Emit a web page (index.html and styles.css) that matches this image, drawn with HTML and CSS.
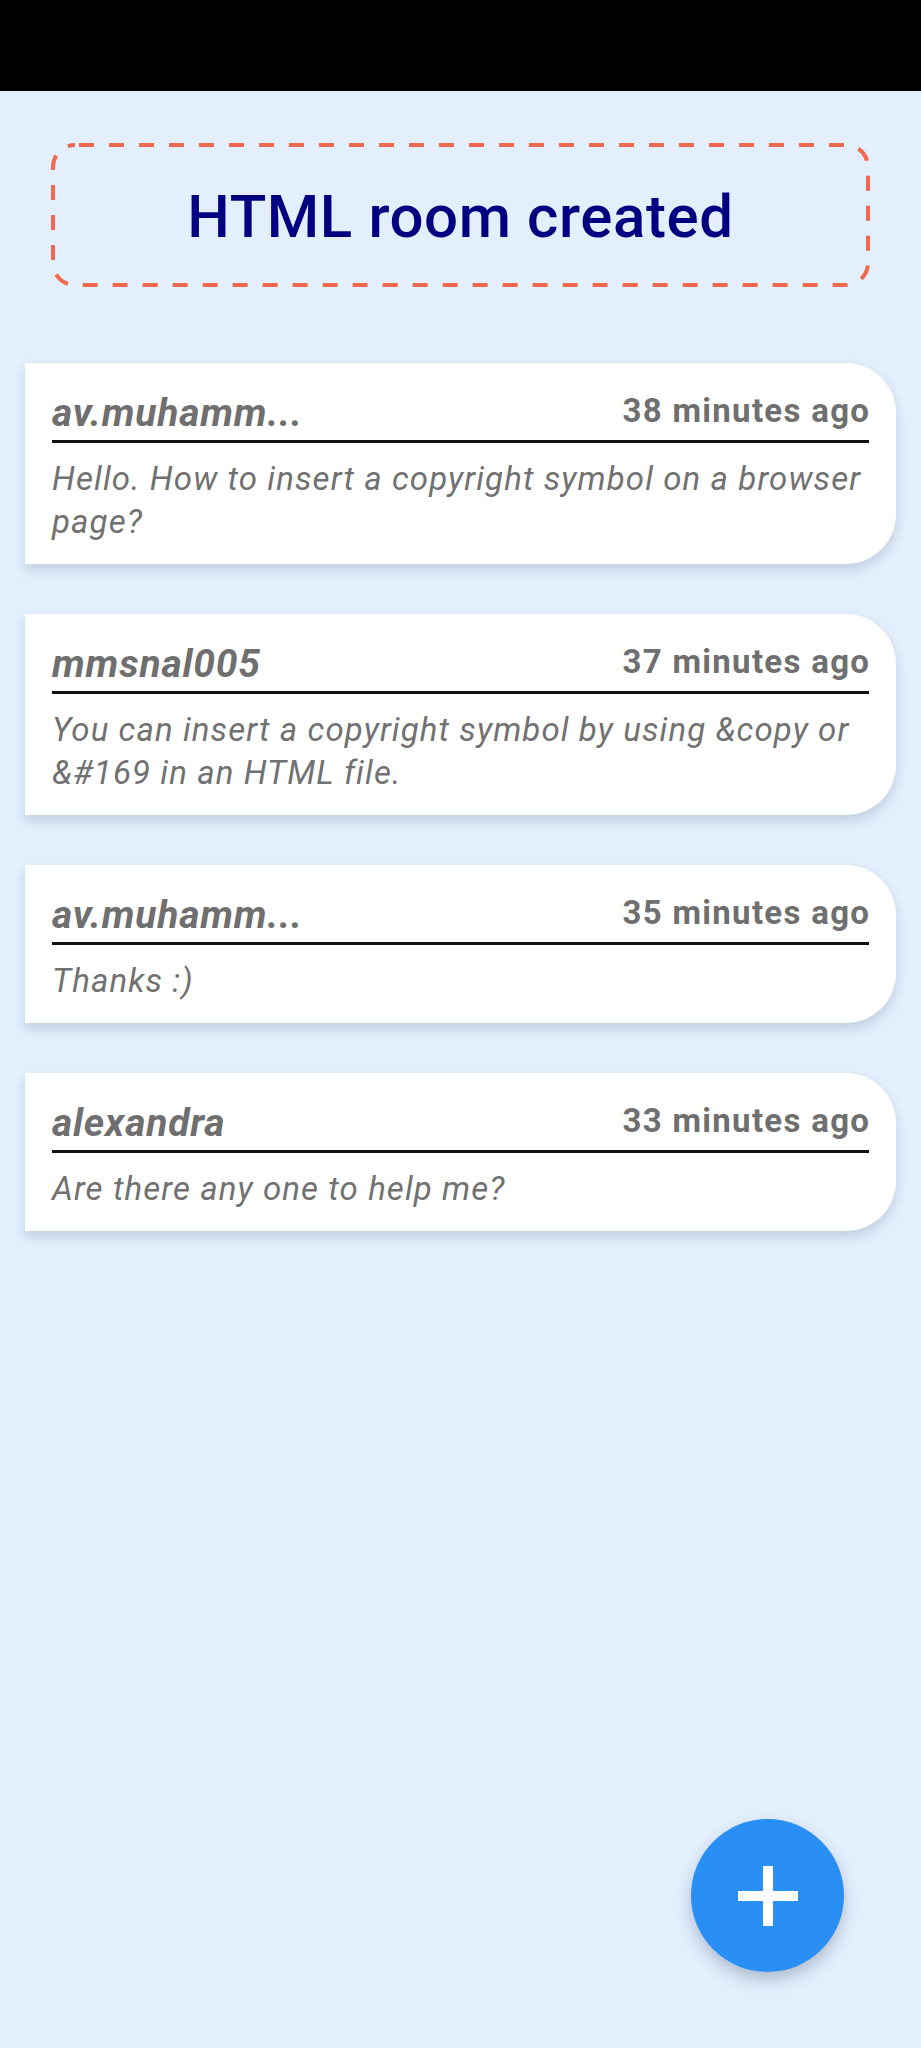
FILE: index.html
```html
<!DOCTYPE html>
<html lang="en">
<head>
<meta charset="utf-8">
<title>HTML room</title>
<link rel="stylesheet" href="styles.css">
</head>
<body>
<div class="statusbar"></div>
<main class="page">
  <div class="room-banner">
    <svg class="banner-frame" width="819" height="144" viewBox="0 0 819 144" aria-hidden="true">
      <rect x="2" y="2" width="815" height="140" rx="22" ry="22" fill="none" stroke="#f0694e" stroke-width="4" stroke-dasharray="15 15" stroke-dashoffset="-4"/>
    </svg>
    <h1 class="room-title">HTML room created</h1>
  </div>
  <ul class="messages">
    <li class="msg">
      <div class="msg-head"><span class="author">av.muhamm...</span><span class="time">38 minutes ago</span></div>
      <p class="msg-text">Hello. How to insert a copyright symbol on a browser page?</p>
    </li>
    <li class="msg">
      <div class="msg-head"><span class="author">mmsnal005</span><span class="time">37 minutes ago</span></div>
      <p class="msg-text">You can insert a copyright symbol by using &amp;copy or &amp;#169 in an HTML file.</p>
    </li>
    <li class="msg">
      <div class="msg-head"><span class="author">av.muhamm...</span><span class="time">35 minutes ago</span></div>
      <p class="msg-text">Thanks :)</p>
    </li>
    <li class="msg">
      <div class="msg-head"><span class="author">alexandra</span><span class="time">33 minutes ago</span></div>
      <p class="msg-text">Are there any one to help me?</p>
    </li>
  </ul>
</main>
<button class="fab" aria-label="New message">
  <svg class="fab-icon" width="60" height="60" viewBox="0 0 60 60" aria-hidden="true">
    <rect x="0" y="25" width="60" height="10" fill="#ffffff"/>
    <rect x="25" y="0" width="10" height="60" fill="#ffffff"/>
  </svg>
</button>
</body>
</html>
```
FILE: styles.css
```css
* { box-sizing: border-box; }

html, body {
  margin: 0;
  padding: 0;
}

body {
  background: #e3effd;
  min-height: 2048px;
  font-family: Roboto, "Liberation Sans", Arial, sans-serif;
}

.statusbar {
  height: 91px;
  background: #000000;
}

.page {
  padding: 0 25px;
}

.room-banner {
  position: relative;
  margin: 52px 26px 0;
  height: 144px;
  display: flex;
  align-items: center;
  justify-content: center;
}

.banner-frame {
  position: absolute;
  left: 0;
  top: 0;
  width: 100%;
  height: 100%;
}

.room-title {
  position: relative;
  margin: 0;
  font-size: 60px;
  font-weight: 500;
  letter-spacing: 0.6px;
  color: #000080;
  line-height: 1;
  padding-top: 4px;
}

.messages {
  list-style: none;
  margin: 76px 0 0;
  padding: 0;
  display: flex;
  flex-direction: column;
  gap: 50px;
}

.msg {
  background: #ffffff;
  border-radius: 0 50px 50px 0;
  padding: 27px 27px 21px;
  box-shadow: 0 6px 12px rgba(40, 60, 90, 0.18);
}

.msg-head {
  display: flex;
  justify-content: space-between;
  align-items: flex-start;
  padding-bottom: 3px;
  border-bottom: 3px solid #111111;
}

.author {
  font-size: 39px;
  line-height: 47px;
  font-weight: 700;
  font-style: italic;
  letter-spacing: 0.8px;
  color: #6f6f6f;
}

.time {
  font-size: 33px;
  line-height: normal;
  margin-top: 1px;
  margin-right: -1.3px;
  font-weight: 700;
  letter-spacing: 1.3px;
  color: #6f6f6f;
}

.msg-text {
  margin: 14px 0 0;
  font-size: 33px;
  line-height: 43px;
  font-style: italic;
  font-weight: 400;
  letter-spacing: 1.1px;
  color: #717171;
}

.fab {
  position: fixed;
  right: 77px;
  bottom: 76px;
  width: 153px;
  height: 153px;
  border: none;
  border-radius: 50%;
  background: #2a8ff5;
  box-shadow: 0 8px 16px rgba(40, 60, 90, 0.28);
  display: flex;
  align-items: center;
  justify-content: center;
  padding: 0;
}

.fab-icon {
  display: block;
}
```
